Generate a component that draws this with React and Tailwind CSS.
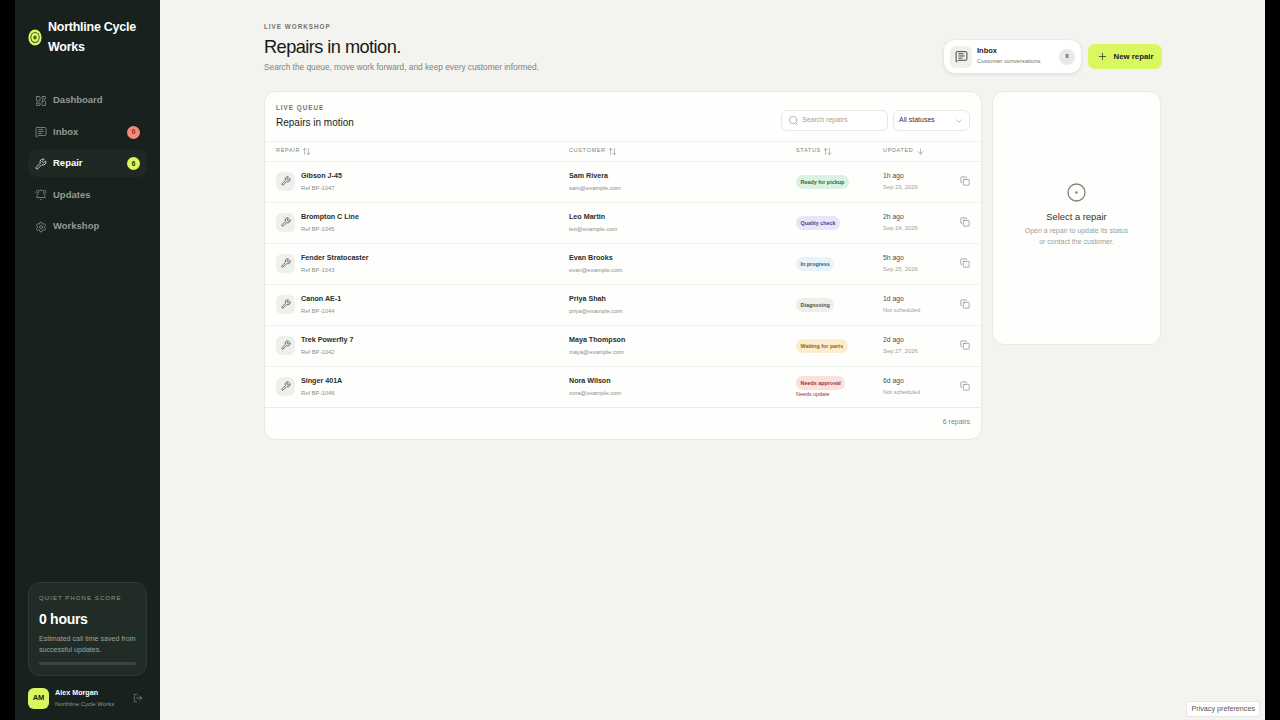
import { LayoutDashboard, MessageSquareText, Wrench, BellRing, Settings, LogOut, Plus, Search, ChevronDown, ArrowUpDown, ArrowDown, Copy } from 'lucide-react';

const nav = [
  { label: 'Dashboard', icon: LayoutDashboard },
  { label: 'Inbox', icon: MessageSquareText, badge: '0', badgeClass: 'bg-[#f28b79] text-[#7a2a1c]' },
  { label: 'Repair', icon: Wrench, badge: '6', badgeClass: 'bg-[#d9f85f] text-[#1a221d]', active: true },
  { label: 'Updates', icon: BellRing },
  { label: 'Workshop', icon: Settings },
];

const repairs = [
  { name: 'Gibson J-45', ref: 'Ref BP-1047', customer: 'Sam Rivera', email: 'sam@example.com', status: 'Ready for pickup', statusClass: 'bg-[#d9f2e2] text-[#2c6b47]', ago: '1h ago', date: 'Sep 23, 2026' },
  { name: 'Brompton C Line', ref: 'Ref BP-1045', customer: 'Leo Martin', email: 'leo@example.com', status: 'Quality check', statusClass: 'bg-[#e9e4fa] text-[#54468c]', ago: '2h ago', date: 'Sep 24, 2026' },
  { name: 'Fender Stratocaster', ref: 'Ref BP-1043', customer: 'Evan Brooks', email: 'evan@example.com', status: 'In progress', statusClass: 'bg-[#e6f3fa] text-[#2b5f80]', ago: '5h ago', date: 'Sep 25, 2026' },
  { name: 'Canon AE-1', ref: 'Ref BP-1044', customer: 'Priya Shah', email: 'priya@example.com', status: 'Diagnosing', statusClass: 'bg-[#eeefeb] text-[#4c524d]', ago: '1d ago', date: 'Not scheduled' },
  { name: 'Trek Powerfly 7', ref: 'Ref BP-1042', customer: 'Maya Thompson', email: 'maya@example.com', status: 'Waiting for parts', statusClass: 'bg-[#fbeecf] text-[#8a6320]', ago: '2d ago', date: 'Sep 27, 2026' },
  { name: 'Singer 401A', ref: 'Ref BP-1046', customer: 'Nora Wilson', email: 'nora@example.com', status: 'Needs approval', statusClass: 'bg-[#fae1de] text-[#9a3a34]', ago: '6d ago', date: 'Not scheduled', note: 'Needs update' },
];

function ColHead({ label, icon: Icon = ArrowUpDown }) {
  return (
    <div className="flex items-center gap-[2px] pb-[2px] text-[5.5px] tracking-[0.12em] text-[#7d827d]">
      <span>{label}</span>
      <Icon size={9} strokeWidth={1.5} className="mt-px" />
    </div>
  );
}

function Sidebar() {
  return (
    <aside className="w-[145px] h-full shrink-0 bg-[#18211d] flex flex-col px-[13px]">
      <div className="flex items-center gap-[6px] pt-[18px]">
        <svg width="14" height="17" viewBox="0 0 14 17" className="shrink-0">
          <ellipse cx="7" cy="8.5" rx="6.6" ry="8" fill="#d9f85f" />
          <ellipse cx="7" cy="8.5" rx="4.6" ry="5.6" fill="#4a5a30" />
          <ellipse cx="7" cy="8.5" rx="3.6" ry="4.4" fill="#d9f85f" />
          <ellipse cx="7" cy="8.5" rx="1.6" ry="1.9" fill="#4a5a30" />
        </svg>
        <div className="text-white font-bold text-[12.5px] leading-[19.5px] tracking-[-0.02em]">Northline Cycle Works</div>
      </div>
      <nav className="mt-[30px] flex flex-col gap-[4.5px]">
        {nav.map((item) => (
          <div key={item.label} className={`h-[27px] flex items-center rounded-lg px-[7px] ${item.active ? 'bg-[#202823] text-white' : 'text-[#939994]'}`}>
            <item.icon size={12} strokeWidth={1.5} className="shrink-0" />
            <span className="ml-[6px] text-[9.5px] font-bold">{item.label}</span>
            {item.badge && (
              <span className={`ml-auto w-[13px] h-[13px] rounded-full flex items-center justify-center text-[6.5px] font-bold ${item.badgeClass}`}>{item.badge}</span>
            )}
          </div>
        ))}
      </nav>
      <div className="mt-auto rounded-xl border border-[#2f3a34] bg-[#222c27] px-[10px] pt-[11px] h-[94px]">
        <div className="text-[6px] tracking-[0.18em] text-[#8e958f]">QUIET PHONE SCORE</div>
        <div className="mt-[7px] text-white font-bold text-[14px] leading-[18px] tracking-[-0.02em]">0 hours</div>
        <div className="mt-[6px] w-[104px] text-[7.1px] leading-[11px] text-[#9ca29d]">Estimated call time saved from successful updates.</div>
        <div className="mt-[6px] h-[3px] rounded-full bg-[#3a4640]" />
      </div>
      <div className="flex items-center h-[44px]">
        <div className="w-[21px] h-[21px] rounded-md bg-[#d9f85f] text-[#18211d] flex items-center justify-center text-[7.5px] font-bold">AM</div>
        <div className="ml-[6px] flex-1">
          <div className="text-white text-[7.2px] font-bold leading-[11px]">Alex Morgan</div>
          <div className="text-[#8e958f] text-[6px] leading-[11px] mt-[1px]">Northline Cycle Works</div>
        </div>
        <LogOut size={10} strokeWidth={1.5} className="text-[#9ca29d] mr-[4px]" />
      </div>
    </aside>
  );
}

function Row({ r }) {
  return (
    <div className="grid grid-cols-[293px_227px_87px_1fr] px-[11px] pb-[2px] h-[41px] items-center border-t border-[#f0f0ec]">
      <div className="flex items-center">
        <div className="w-[19px] h-[19px] rounded-md bg-[#eff0ec] flex items-center justify-center text-[#1a221d]">
          <Wrench size={10} strokeWidth={1.5} />
        </div>
        <div className="ml-[6px] mt-[1px]">
          <div className="text-[7.15px] font-bold leading-[11px] text-[#2a2d2a]">{r.name}</div>
          <div className="text-[5.85px] leading-[9px] mt-[2px] text-[#8b8f8b]">{r.ref}</div>
        </div>
      </div>
      <div className="mt-[1px]">
        <div className="text-[7.15px] font-bold leading-[11px] text-[#2a2d2a]">{r.customer}</div>
        <div className="text-[5.85px] leading-[9px] mt-[2px] text-[#8b8f8b]">{r.email}</div>
      </div>
      <div className="flex flex-col items-start mt-[2px]">
        <span className={`rounded-full px-[4.5px] h-[14px] leading-[14px] text-[5.4px] font-bold ${r.statusClass}`}>{r.status}</span>
        {r.note && <div className="text-[5.4px] leading-[9px] text-[#9a3a34]">{r.note}</div>}
      </div>
      <div className="flex items-center justify-between">
        <div>
          <div className="text-[6.8px] leading-[11px] text-[#4a4e4a]">{r.ago}</div>
          <div className="text-[5.85px] leading-[9px] mt-[2px] text-[#9a9e9a]">{r.date}</div>
        </div>
        <Copy size={10} strokeWidth={1.2} className="text-[#555a55]" />
      </div>
    </div>
  );
}

export default function App() {
  return (
    <div className="relative w-screen h-screen overflow-hidden bg-black px-[15px] flex font-['Liberation_Sans',Arial,sans-serif]">
      <Sidebar />
      <main className="flex-1 h-full bg-[#f3f3f0]">
        <div className="w-[898px] ml-[104px] pt-[23px]">
          <header className="flex items-start justify-between h-[68px]">
            <div>
              <div className="text-[6.3px] font-bold leading-[8px] tracking-[0.16em] text-[#6f746f]">LIVE WORKSHOP</div>
              <h1 className="mt-[2px] text-[18.2px] leading-[28px] tracking-[-0.03em] text-[#171a18]">Repairs in motion.</h1>
              <p className="text-[8.3px] leading-[12px] text-[#7d827d]">Search the queue, move work forward, and keep every customer informed.</p>
            </div>
            <div className="flex items-center gap-[6px] pt-[16px]">
              <div className="w-[139px] h-[35px] rounded-xl bg-white border border-[#e8e8e4] shadow-[0_1px_3px_rgba(0,0,0,0.08)] flex items-center px-[6px]">
                <div className="w-[22px] h-[22px] rounded-md bg-[#eff0ec] flex items-center justify-center text-[#1a221d]">
                  <MessageSquareText size={13} strokeWidth={1.5} />
                </div>
                <div className="ml-[5px] flex-1 pb-[2px]">
                  <div className="text-[7.5px] font-bold leading-[10px] text-[#222]">Inbox</div>
                  <div className="text-[5.9px] leading-[9px] mt-[1px] text-[#6f746f]">Customer conversations</div>
                </div>
                <div className="w-[16px] h-[16px] rounded-full bg-[#e9eae6] flex items-center justify-center text-[5.5px] font-bold text-[#333]">0</div>
              </div>
              <div className="w-[74px] h-[25px] rounded-[7px] bg-[#d9f85f] flex items-center justify-center gap-[6px] text-[#18211d]">
                <Plus size={11} strokeWidth={1.5} />
                <span className="text-[7.8px] font-bold">New repair</span>
              </div>
            </div>
          </header>
          <div className="flex items-start gap-[10px]">
            <section className="w-[718px] h-[349px] rounded-xl bg-[#fefefc] border border-[#e8e8e4] flex flex-col">
              <div className="h-[49px] flex items-start justify-between px-[11px]">
                <div className="pt-[12px]">
                  <div className="text-[6.3px] font-bold leading-[8px] tracking-[0.16em] text-[#6f746f]">LIVE QUEUE</div>
                  <div className="mt-[3px] text-[10px] leading-[16px] text-[#171a18]">Repairs in motion</div>
                </div>
                <div className="flex items-center gap-[5px] pt-[18px]">
                  <div className="w-[107px] h-[21px] rounded-md bg-white border border-[#e6e6e2] flex items-center px-[6px] text-[#7d827d]">
                    <Search size={11} strokeWidth={1.2} />
                    <span className="ml-[3px] text-[7px] text-[#a0a4a0]">Search repairs</span>
                  </div>
                  <div className="w-[77px] h-[21px] rounded-md bg-white border border-[#e6e6e2] flex items-center justify-between px-[5px]">
                    <span className="text-[7px] text-[#333]">All statuses</span>
                    <ChevronDown size={10} strokeWidth={1.2} className="text-[#7d827d]" />
                  </div>
                </div>
              </div>
              <div className="grid grid-cols-[293px_227px_87px_1fr] px-[11px] h-[20px] items-center border-t border-[#f0f0ec]">
                <ColHead label="REPAIR" />
                <ColHead label="CUSTOMER" />
                <ColHead label="STATUS" />
                <ColHead label="UPDATED" icon={ArrowDown} />
              </div>
              {repairs.map((r) => <Row key={r.ref} r={r} />)}
              <div className="flex-1 border-t border-[#eaeae6] flex items-center justify-end px-[11px] pb-[2px] text-[7px] text-[#7d827d]">6 repairs</div>
            </section>
            <aside className="w-[169px] h-[254px] rounded-xl bg-[#fefefc] border border-[#e8e8e4] flex flex-col items-center pt-[91px]">
              <svg width="19" height="19" viewBox="0 0 19 19" fill="none">
                <circle cx="9.5" cy="9.5" r="8.5" stroke="#7d827d" strokeWidth="1.3" />
                <circle cx="9.5" cy="9.5" r="1.2" fill="#7d827d" />
              </svg>
              <div className="mt-[8px] text-[9.4px] leading-[14px] text-[#333]">Select a repair</div>
              <div className="mt-[2px] text-[7px] leading-[10.5px] text-center text-[#9a9e9a]">Open a repair to update its status<br />or contact the customer.</div>
            </aside>
          </div>
        </div>
      </main>
      <div className="absolute right-[20px] bottom-[3px] h-[16px] px-[4px] bg-white border border-[#e6e6e2] rounded-[2px] flex items-center text-[7.2px] text-[#555]">Privacy preferences</div>
    </div>
  );
}
